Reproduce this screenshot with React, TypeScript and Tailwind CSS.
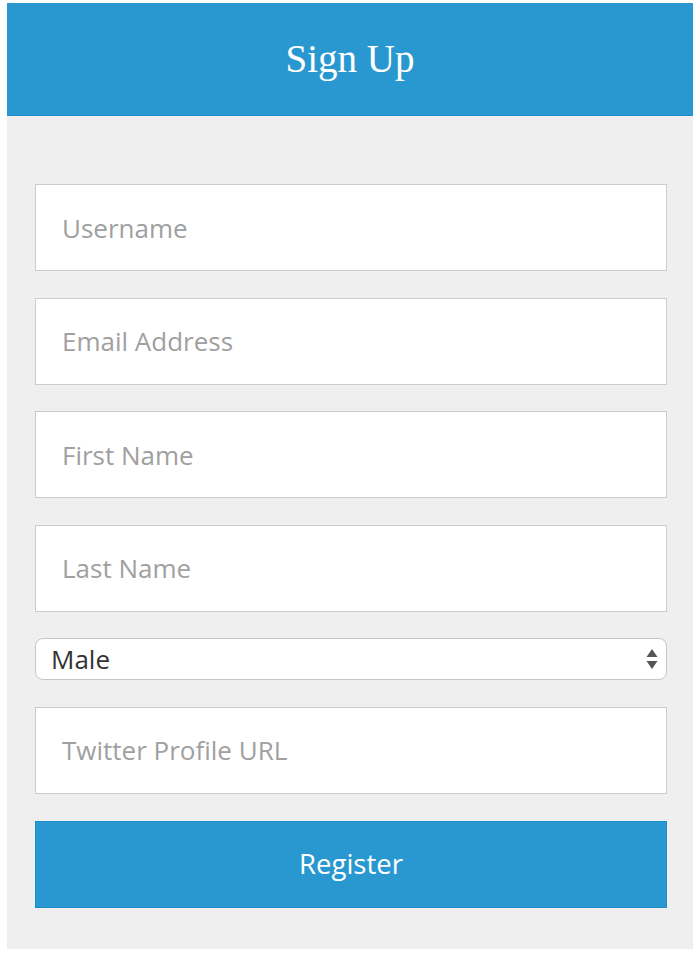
import React from "react";

const fields = ["Username", "Email Address", "First Name", "Last Name"];

function Field({ ph }: { ph: string }) {
  return (
    <input
      type="text"
      placeholder={ph}
      className="block w-full h-[87px] bg-white border border-[#cccccc] px-[26px] text-[26px] text-[#333] placeholder:text-[#a0a0a0] outline-none [font-family:'Open_Sans',sans-serif]"
    />
  );
}

export default function App() {
  return (
    <div className="bg-white min-h-[956px] pt-[3px]">
      <div className="ml-[7px] w-[686px]">
        <div className="h-[113px] bg-[#2a98d0] border-b border-[#1f8ccb] flex items-center justify-center">
          <h1 className="text-white text-[39px] leading-none [font-family:'Liberation_Serif',serif] mt-[-1px]">
            Sign Up
          </h1>
        </div>
        <div className="bg-[#efefef] px-[28px] pt-[68px] pb-[41px] flex flex-col gap-[26.6px] pr-[26px]">
          {fields.map((f) => (
            <Field key={f} ph={f} />
          ))}
          <div className="h-[42px] bg-white border border-[#c6c6c6] rounded-[8px] flex items-center justify-between pl-[15px] pr-[7px] [font-family:'Open_Sans',sans-serif]">
            <span className="text-[26px] text-[#333] leading-none">Male</span>
            <svg width="14" height="24" viewBox="0 0 14 24" className="block">
              <path d="M7 2 L12.5 10 L1.5 10 Z" fill="#555" />
              <path d="M7 22 L12.5 14 L1.5 14 Z" fill="#555" />
            </svg>
          </div>
          <Field ph="Twitter Profile URL" />
          <button className="h-[87px] w-full bg-[#2a98d0] border border-[#1f8ccb] text-white text-[27.5px] [font-family:'Open_Sans',sans-serif]">
            Register
          </button>
        </div>
      </div>
    </div>
  );
}
